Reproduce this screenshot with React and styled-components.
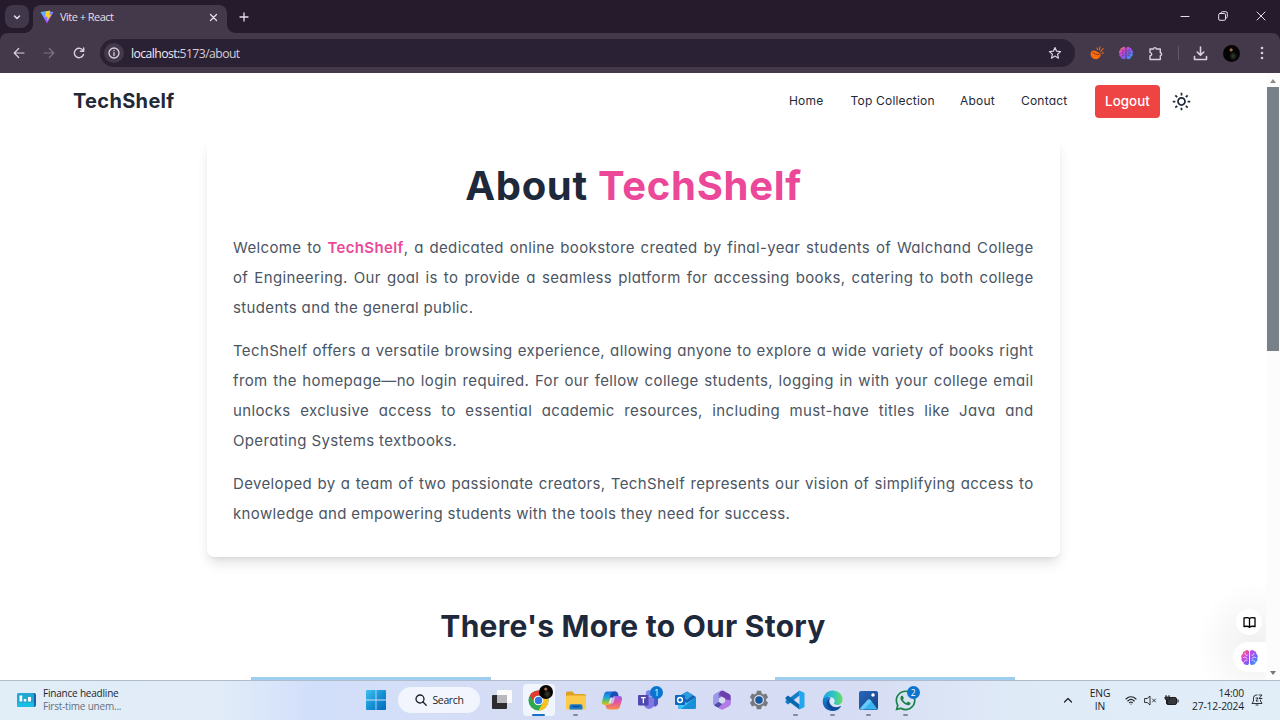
import React from "react";
import styled, { createGlobalStyle, css } from "styled-components";
import { BiSun } from "react-icons/bi";
import { FaWhatsapp } from "react-icons/fa";

const Global = createGlobalStyle`
  *, *::before, *::after { box-sizing: border-box; }
  html, body, #root { margin: 0; height: 100%; }
  body { overflow: hidden; background: #fff; font-family: Inter, "Liberation Sans", sans-serif; }
  h1, h2, p { margin: 0; }
  svg { display: block; flex: none; }
`;

const Screen = styled.div`
  width: 1280px;
  height: 720px;
  display: flex;
  flex-direction: column;
  overflow: hidden;
`;

/* Browser window */
const TabStrip = styled.div`
  height: 33px;
  flex: none;
  display: flex;
  background: #251b2d;
  padding: 5px 0 0 5px;
  color: #e6dfea;
`;
const TabSearch = styled.div`
  width: 24px;
  height: 23px;
  border-radius: 8px;
  background: #41374a;
  display: grid;
  place-items: center;
`;
const Tab = styled.div`
  position: relative;
  width: 194px;
  height: 28px;
  margin-left: 4px;
  padding: 0 9px 4px 7px;
  border-radius: 8px 8px 0 0;
  background: #43394b;
  display: flex;
  align-items: center;
  font: 11px "Open Sans", sans-serif;
  &::before, &::after {
    content: "";
    position: absolute;
    bottom: 0;
    width: 8px;
    height: 8px;
  }
  &::before { left: -8px; background: radial-gradient(circle at 0 0, transparent 7.5px, #43394b 8px); }
  &::after { right: -8px; background: radial-gradient(circle at 100% 0, transparent 7.5px, #43394b 8px); }
`;
const TabTitle = styled.span`
  flex: 1;
  margin: -1px 0 0 6px;
  letter-spacing: -0.53px;
`;
const NewTab = styled.div`
  margin: 7px 0 0 12px;
`;
const WindowButtons = styled.div`
  display: flex;
  gap: 28px;
  margin: 6px 14px 0 auto;
`;
const ToolbarBack = styled.div`
  background: #251b2d;
  flex: none;
`;
const Toolbar = styled.div`
  height: 40px;
  background: #43394b;
  border-radius: 8px 8px 0 0;
  display: flex;
  align-items: center;
  padding: 0 12px;
  color: #d9d0df;
`;
const NavButtons = styled.div`
  display: flex;
  gap: 16px;
  width: 88px;
`;
const AddressBar = styled.div`
  width: 975px;
  height: 28px;
  border-radius: 14px;
  background: #2b2134;
  display: flex;
  align-items: center;
  padding: 0 13px 0 4px;
`;
const SiteInfo = styled.div`
  width: 20px;
  height: 20px;
  border-radius: 50%;
  background: #43394b;
  display: grid;
  place-items: center;
`;
const Url = styled.span`
  flex: 1;
  margin-left: 7px;
  font: 12.2px "Open Sans", sans-serif;
  letter-spacing: -0.57px;
  color: #d5ccda;
  b { font-weight: 400; color: #f0e9f3; }
`;
const Extensions = styled.div`
  display: flex;
  align-items: center;
  gap: 15px;
  margin-left: 15px;
`;
const Divider = styled.i`
  width: 1px;
  height: 14px;
  margin-right: -1px;
  background: #62576a;
`;
const MoreIcon = styled.svg`
  margin-left: 5px;
`;
const Avatar = styled.span`
  display: block;
  width: 17px;
  height: 17px;
  flex: none;
  border-radius: 50%;
  background:
    radial-gradient(circle at 48% 29%, #a4704e 0 1px, transparent 2px),
    radial-gradient(ellipse at 60% 65%, #2d3326 0 1px, transparent 4px),
    #050405;
`;

/* Web page */
const Viewport = styled.div`
  height: 607px;
  flex: none;
  display: flex;
  position: relative;
  font-feature-settings: "cv11";
`;
const Page = styled.main`
  width: 1266px;
  height: 607px;
  overflow: hidden;
  background: #fff;
`;
const Header = styled.header`
  height: 57px;
  display: flex;
  align-items: center;
  padding: 0 74px 0 73px;
  color: #1f2937;
`;
const Brand = styled.div`
  font-size: 20px;
  font-weight: 700;
  letter-spacing: 0.32px;
  padding-bottom: 1px;
`;
const Menu = styled.nav`
  margin-left: auto;
  display: flex;
  gap: 26px;
  margin-right: 26px;
  padding-bottom: 3px;
  font-size: 12px;
  color: #1f2937;
`;
const MenuItem = styled.a`
  width: ${(p) => p.$w}px;
  white-space: nowrap;
  letter-spacing: 0.2px;
`;
const Logout = styled.button`
  width: 65px;
  height: 33px;
  border: 0;
  padding: 0 0 2px;
  border-radius: 4px;
  background: #ef4444;
  color: #fff;
  font: 500 13.3px Inter, sans-serif;
  font-feature-settings: "cv11";
  letter-spacing: 0.1px;
  margin-right: 11px;
`;
const Card = styled.section`
  width: 853px;
  height: 418px;
  margin: 9px 0 0 207px;
  padding: 19px 26px 0;
  border-radius: 7px;
  background: #fff;
  box-shadow: 0 8px 13px -2px rgba(0, 0, 0, 0.12), 0 3px 5px -3px rgba(0, 0, 0, 0.1);
`;
const Title = styled.h1`
  height: 56px;
  line-height: 55px;
  text-align: center;
  font-size: 40px;
  font-weight: 700;
  letter-spacing: 0.7px;
  white-space: nowrap;
  color: #1e293b;
`;
const Pink = styled.span`
  color: #ec4899;
  font-weight: ${(p) => p.$weight || "inherit"};
`;
const Paragraph = styled.p`
  margin-top: 13.2px;
  font-size: 15px;
  line-height: 30px;
  color: #4b5563;
  &:first-of-type { margin-top: 19px; }
`;
const Line = styled.span`
  display: block;
  width: 800.5px;
  white-space: nowrap;
  letter-spacing: 0.36px;
  ${(p) => !p.$last && css`text-align-last: justify;`}
`;
const Subtitle = styled.h2`
  margin-top: 47px;
  height: 44px;
  line-height: 44px;
  text-align: center;
  font-size: 30px;
  font-weight: 700;
  letter-spacing: 0.26px;
  color: #1e293b;
`;
const Features = styled.div`
  display: flex;
  justify-content: space-between;
  width: 764px;
  margin: 29px auto 0;
`;
const Feature = styled.div`
  width: 240px;
  height: 200px;
  background: ${(p) => (p.$blue ? "#9fcdee" : "transparent")};
`;
const Scrollbar = styled.div`
  width: 14px;
  height: 607px;
  display: flex;
  flex-direction: column;
  align-items: center;
  background: #fcfcfc;
  padding: 5px 0 5px;
`;
const Thumb = styled.div`
  width: 12px;
  height: 264px;
  margin-top: 4px;
  background: #788088;
`;
const Arrow = styled.i`
  width: 0;
  height: 0;
  border: 3px solid transparent;
  ${(p) => (p.$up ? css`border-bottom: 4px solid #8a8a8a; border-top: 0; margin: 1px 0 0;` : css`border-top: 4px solid #777; border-bottom: 0; margin-top: auto;`)}
`;
const Floating = styled.div`
  position: absolute;
  right: 14px;
  bottom: 0;
  width: 70px;
  height: 100px;
  padding: 29px 0 0;
  display: flex;
  flex-direction: column;
  align-items: flex-end;
  background: radial-gradient(ellipse at 85% 65%, rgba(0, 0, 0, 0.06), transparent 70%);
`;
const ReadButton = styled.div`
  width: 26px;
  height: 26px;
  margin: 0 4px 7px 0;
  border-radius: 50%;
  background: #fff;
  display: grid;
  place-items: center;
`;
const BrainButton = styled.div`
  width: 33px;
  height: 30px;
  border-radius: 15px 0 0 15px;
  background: #fff;
  display: flex;
  align-items: center;
  padding-left: 8px;
`;

/* Taskbar */
const Taskbar = styled.footer`
  height: 40px;
  flex: none;
  border-top: 1px solid #afbccb;
  background: linear-gradient(90deg, #e1edf7 0, #e1ecf8 220px, #d2dffa 310px, #d5ddf5 500px, #d6dcf3 850px, #dfeaf7 1010px, #e1eef8 1280px);
  display: flex;
  align-items: center;
  padding-bottom: 1px;
  font-family: "Open Sans", sans-serif;
  color: #1c1f26;
`;
const Widget = styled.div`
  width: 366px;
  padding: 0 0 1px 17px;
  display: flex;
  align-items: center;
  gap: 7px;
`;
const WidgetText = styled.div`
  font-size: 10px;
  line-height: 13px;
  letter-spacing: -0.2px;
  div + div { color: #66707c; }
`;
const SearchPill = styled.div`
  width: 82px;
  height: 26px;
  margin: 0 4px 0 12px;
  border-radius: 13px;
  background: #f2f5fd;
  display: flex;
  align-items: center;
  justify-content: center;
  gap: 5px;
  padding-left: 1px;
  font-size: 10.5px;
  letter-spacing: -0.35px;
`;
const AppCell = styled.div`
  position: relative;
  width: 36.65px;
  height: 38px;
  display: grid;
  place-items: center;
  isolation: isolate;
  ${(p) => p.$active && css`
    &::before {
      content: "";
      position: absolute;
      z-index: -1;
      inset: 3px 2.5px 3px;
      border-radius: 4px;
      background: #f1f5fe;
    }
  `}
  ${(p) => p.$open && css`
    &::after {
      content: "";
      position: absolute;
      bottom: 3px;
      width: ${p.$active ? 13 : 5}px;
      height: 2.5px;
      border-radius: 2px;
      background: ${p.$active ? "#1670c4" : "#858a98"};
    }
  `}
`;
const Badge = styled.span`
  position: absolute;
  top: 5px;
  right: 4px;
  width: 13px;
  height: 13px;
  border-radius: 50%;
  background: #0a74cf;
  color: #fff;
  font-size: 8.5px;
  line-height: 13px;
  text-align: center;
`;
const BadgeAvatar = styled(Avatar)`
  position: absolute;
  top: 4px;
  right: 4px;
  width: 14px;
  height: 14px;
`;
const Tray = styled.div`
  margin-left: auto;
  padding-right: 17px;
  display: flex;
  align-items: center;
`;
const TrayText = styled.div`
  width: ${(p) => p.$w}px;
  font-size: 10.3px;
  line-height: 13px;
  letter-spacing: -0.17px;
  text-align: ${(p) => p.$align || "right"};
`;
const TrayIcons = styled.div`
  display: flex;
  align-items: center;
  gap: 7px;
  margin-left: -2px;
`;
const Clock = styled.div`
  display: flex;
  align-items: center;
  gap: 7px;
`;

const Stroke = ({ w = 14, vb = 14, sw = 1.4, d, children, color = "currentColor", h = w }) => (
  <svg width={w} height={h} viewBox={`0 0 ${vb} ${vb}`} fill="none" stroke={color} strokeWidth={sw} strokeLinecap="round" strokeLinejoin="round">
    {d && <path d={d} />}
    {children}
  </svg>
);

const HiddenSvg = styled.svg`
  position: absolute;
`;

const Defs = () => (
  <HiddenSvg width="0" height="0">
    <defs>
      <linearGradient id="brain" gradientUnits="userSpaceOnUse" x1="0" y1="0" x2="17" y2="17">
        <stop offset=".08" stopColor="#ff8a3c" />
        <stop offset=".3" stopColor="#dc45d4" />
        <stop offset=".6" stopColor="#7f5cf5" />
        <stop offset="1" stopColor="#14bdf8" />
      </linearGradient>
      <linearGradient id="win" gradientUnits="userSpaceOnUse" x1="0" y1="0" x2="20" y2="20">
        <stop offset="0" stopColor="#3fc0ee" />
        <stop offset=".5" stopColor="#1593d6" />
        <stop offset="1" stopColor="#0569bd" />
      </linearGradient>
      <linearGradient id="viteA" x1="0" y1="0" x2=".7" y2="1">
        <stop offset="0" stopColor="#41d1ff" />
        <stop offset="1" stopColor="#bd34fe" />
      </linearGradient>
      <linearGradient id="edgeA" x1="0" y1="0" x2="1" y2="0">
        <stop offset="0" stopColor="#1ba3e4" />
        <stop offset=".6" stopColor="#34c7bd" />
        <stop offset="1" stopColor="#6bdf53" />
      </linearGradient>
      <linearGradient id="edgeB" x1="0" y1="0" x2="0" y2="1">
        <stop offset="0" stopColor="#1489d8" />
        <stop offset="1" stopColor="#0d50a5" />
      </linearGradient>
      <linearGradient id="copA" x1="0" y1="0" x2="0" y2="1">
        <stop offset="0" stopColor="#1769df" />
        <stop offset=".45" stopColor="#20a9d8" />
        <stop offset=".75" stopColor="#79c54a" />
        <stop offset="1" stopColor="#f1b81f" />
      </linearGradient>
      <linearGradient id="copB" x1="0" y1="0" x2="0" y2="1">
        <stop offset="0" stopColor="#9b61ef" />
        <stop offset=".5" stopColor="#e4559e" />
        <stop offset="1" stopColor="#fa9248" />
      </linearGradient>
      <linearGradient id="photo" x1="0" y1="0" x2="1" y2="1">
        <stop offset="0" stopColor="#2468bb" />
        <stop offset="1" stopColor="#1c4284" />
      </linearGradient>
    </defs>
  </HiddenSvg>
);

const BrainLogo = ({ size, gap }) => (
  <svg width={size} height={size} viewBox="0 0 17 17">
    <path fill="url(#brain)" d="M8 2.600A2.200 2.200 0 0 0 4 2 2.600 2.600 0 0 0 1.700 5 2.800 2.800 0 0 0 .8 9.200a2.900 2.900 0 0 0 1.500 4.100A2.700 2.700 0 0 0 5 15.800 2 2 0 0 0 8 14.500zM9 2.600A2.200 2.200 0 0 1 13 2a2.600 2.600 0 0 1 2.300 3 2.800 2.800 0 0 1 .9 4.200 2.900 2.900 0 0 1-1.500 4.100 2.700 2.700 0 0 1-2.700 2.500 2 2 0 0 1-3-1.300z" />
    <path fill="none" stroke={gap} strokeWidth=".75" strokeLinecap="round" d="M4 4.500c0 1.300 1 2 2.200 1.800M2.500 8.500c1.500-.8 3-.3 3.500.8M3.500 12.500c.2-1.200 1.200-1.700 2.500-1.300M13 4.500c0 1.300-1 2-2.200 1.800M14.500 8.500c-1.500-.8-3-.3-3.500.8M13.500 12.500c-.2-1.200-1.200-1.700-2.500-1.300" />
  </svg>
);
const ViteLogo = () => (
  <svg width="14" height="14" viewBox="0 0 28 28">
    <path d="M1 4 13 2l14 2-13 23z" fill="url(#viteA)" />
    <path d="m12 3 8-2-1 9 4-1-9 13 1-9-5 1z" fill="#ffcf27" />
  </svg>
);
const WidgetIcon = () => (
  <svg width="19" height="14" viewBox="0 0 19 14">
    <rect x="9" y="0" width="10" height="14" rx="2" fill="#1a61ad" />
    <rect width="17" height="14" rx="1.5" fill="#20a8d2" />
    <path d="M0 10h17v2.5a1.5 1.5 0 0 1-1.5 1.5h-14A1.5 1.5 0 0 1 0 12.500z" fill="#18bfe3" />
    <path d="M2.500 2.500h2.700v6H2.500zM6.800 6h2.500v2.500H6.800zM11 4h3v4.500h-3z" fill="#fff" />
  </svg>
);
const WindowsLogo = () => (
  <svg width="20" height="20" viewBox="0 0 20 20" fill="url(#win)">
    <path d="M0 1a1 1 0 0 1 1-1h8.600v9.600H0zM10.400 0H19a1 1 0 0 1 1 1v8.600h-9.600zM0 10.400h9.600V20H1a1 1 0 0 1-1-1zM10.400 10.400H20V19a1 1 0 0 1-1 1h-8.600z" />
  </svg>
);
const TaskView = () => (
  <svg width="20" height="20" viewBox="0 0 20 20">
    <rect x="0" y="5" width="15" height="14" rx="1" fill="#2d2c2e" />
    <rect x="5" y="0" width="15" height="13" rx="1" fill="#fbfbfc" />
    <path d="M5 5h10v8H5z" fill="#b9b9bd" />
  </svg>
);
const Chrome = () => (
  <svg width="21" height="21" viewBox="0 0 48 48">
    <circle cx="24" cy="24" r="23" fill="#2da84e" />
    <path d="M24 13h20A23 23 0 0 1 24 47l9.500-17.500z" fill="#fcc31e" />
    <path d="M4.100 12.500A23 23 0 0 1 43.900 12.500H24A11 11 0 0 0 14.500 29z" fill="#e33b2e" />
    <circle cx="24" cy="24" r="11" fill="#fff" />
    <circle cx="24" cy="24" r="8.500" fill="#3277e2" />
  </svg>
);
const Folder = () => (
  <svg width="20" height="19" viewBox="0 0 20 19">
    <path d="M0 2a1.500 1.500 0 0 1 1.500-1.500h5L8.500 3H18a2 2 0 0 1 2 2v6H0z" fill="#dea122" />
    <rect y="4.500" width="20" height="14" rx="1.500" fill="#fdcb4b" />
    <path d="M3.500 18.500V15a1.800 1.800 0 0 1 1.800-1.800h9.400a1.800 1.800 0 0 1 1.800 1.800v3.500z" fill="#1878c9" />
    <path d="M6.500 15.500h7" stroke="#0b4a87" strokeWidth="1.300" />
  </svg>
);
const Copilot = () => (
  <svg width="20" height="19" viewBox="0 0 40 38">
    <path d="M11 1h15c4 0 5 2 6 5l1 3h-5c-4 0-6 2-7 6l-3 8c-1 4-3 5-6 5H6c-5 0-7-3-6-7L4 7c1-4 3-6 7-6z" fill="url(#copA)" />
    <path d="M29 37H14c-4 0-5-2-6-5l-1-4h5c4 0 6-2 7-6l3-8c1-3 3-4 6-4h6c5 0 7 3 6 7l-4 14c-1 4-3 6-7 6z" fill="url(#copB)" />
    <path d="M26 1c4 0 5 2 6 5l1 4h-5c-4 0-6 1-7 4l-1 1h-5l2-8c1-4 4-6 9-6z" fill="#1c4cb4" />
    <path d="M17 13h4l-4 12h-4z" fill="#dfe6fa" />
    <path d="M22 13h4l-4 12h-4z" fill="#dfe6fa" opacity=".7" />
  </svg>
);
const Teams = () => (
  <svg width="21" height="20" viewBox="0 0 21 20">
    <circle cx="11" cy="3.500" r="3.200" fill="#7b83eb" />
    <path d="M14 7h6v6.500a3.500 3.500 0 0 1-6 2z" fill="#5059c9" />
    <path d="M6 7h10v7a5 5 0 0 1-10 0z" fill="#8178e3" />
    <rect x="0" y="5" width="10.500" height="10.500" rx="1" fill="#4d49ad" />
    <path d="M3 7.700h4.700M5.350 7.700v5.500" stroke="#fff" strokeWidth="1.300" />
  </svg>
);
const Outlook = () => (
  <svg width="21" height="18" viewBox="0 0 21 18">
    <path d="M3 6 12 .5 21 6v10a2 2 0 0 1-2 2H5a2 2 0 0 1-2-2z" fill="#1565b4" />
    <path d="M6 4 12 .5 18 4l-6 5z" fill="#2f9ade" />
    <path d="m3 7 9 5 9-6v10a2 2 0 0 1-2 2H5a2 2 0 0 1-2-2z" fill="#3cc5f2" />
    <path d="M21 6 6 18h13a2 2 0 0 0 2-2z" fill="#178fda" />
    <rect y="4" width="10" height="10" rx="1" fill="#0b68bd" />
    <circle cx="5" cy="9" r="2.400" fill="none" stroke="#fff" strokeWidth="1.500" />
  </svg>
);
const M365 = () => (
  <svg width="18" height="20" viewBox="0 0 36 40">
    <path fillRule="evenodd" d="M15 2c2-1 4-1 6 0l11 6c2 1 3 3 3 5v14c0 2-1 4-3 5l-11 6c-2 1-4 1-6 0L4 32c-2-1-3-3-3-5V13c0-2 1-4 3-5zM18 13l-7 4v7l7 4 7-4v-7z" fill="#8a6bd0" />
    <path d="M15 2c2-1 4-1 6 0L11 9v15L3 30c-1-1-2-2-2-3V13c0-2 1-4 3-5z" fill="#9a9be6" />
    <path d="M21 2l11 6c2 1 3 3 3 5v10l-10-4v-2L11 9l4-6c2-2 4-2 6-1z" fill="#6c41ad" />
    <path d="M35 20v7c0 2-1 4-3 5l-11 6c-2 1-4 1-6 0l-5-3 15-11v-5z" fill="#b47be6" />
    <path d="M3 30l8-6 7 4-7 7-7-3z" fill="#4a4ea8" />
  </svg>
);
const Gear = () => (
  <svg width="20" height="20" viewBox="0 0 24 24">
    <path fill="#77797e" d="m9.500 1 5 0 .8 3.200 1.900 1.100 3.200-1 2.500 4.400L20.500 11v2l2.400 2.300-2.500 4.400-3.200-1-1.900 1.100-.8 3.200h-5l-.8-3.200-1.900-1.100-3.200 1L1.100 15.300 3.500 13v-2L1.100 8.700l2.500-4.400 3.200 1 1.900-1.100z" />
    <circle cx="12" cy="12" r="6" fill="#d9dff1" />
    <circle cx="12" cy="12" r="4.500" fill="#17599e" />
  </svg>
);
const VsCode = () => (
  <svg width="20" height="20" viewBox="0 0 40 40">
    <path d="M29 1 39 6v28l-10 5z" fill="#23a6ee" />
    <path d="M29 1v10L6 29l-5-4v-3z" fill="#147fc9" />
    <path d="M29 39V29L6 11l-5 4v3z" fill="#0768ae" />
  </svg>
);
const Edge = () => (
  <svg width="21" height="21" viewBox="0 0 42 42">
    <path d="M2 19C4 8 11 1 21 1c11 0 20 8 20 17 0 8-5 12-11 12-5 0-7-2-6-4 2-3 2-11-7-12-7-1-12 1-15 5z" fill="url(#edgeA)" />
    <path d="M2 18c3-4 9-6 16-3-8 1-9 10-5 16 5 8 15 8 24 3-4 6-10 8-16 8C9 42-1 32 2 18z" fill="url(#edgeB)" />
    <path d="M18 16c-5 2-4 10 0 14 4 5 12 6 19 2 1 0 1 1 0 2-6 7-19 8-25-1-5-7-2-17 6-17z" fill="#0d4a94" />
    <path d="M24 26c1-2 2-6-1-9-4-2-8 3-5 8 3 6 12 9 19 6l-7-1c-5 0-7-2-6-4z" fill="#e2e8f8" />
  </svg>
);
const Photos = () => (
  <svg width="19" height="19" viewBox="0 0 38 38">
    <rect width="38" height="38" rx="4" fill="url(#photo)" />
    <path d="M2 35 17 18c2-2 4-2 6 0l13 17-2 2H4z" fill="#39b4f0" />
    <path d="M2 35 17 18c2-2 4-2 6 0l2 3-16 16H4z" fill="#7bd4fb" opacity=".7" />
    <circle cx="28" cy="8" r="3.500" fill="#fff" />
  </svg>
);
const Tangerine = () => (
  <svg width="14" height="14" viewBox="0 0 14 14">
    <path d="M1 5.800C3.200 3.300 6.500 5 10.600 8c.5 2.300-1.800 5-4.800 5.200C2.300 13.400-.6 9.200 1 5.800z" fill="#fb6a0b" />
    <path d="M2.500 5.800C3.500 7.600 6.500 8.900 9.500 8.500" stroke="#67343a" strokeWidth=".8" fill="none" />
    <path d="M7.500 3.500 7 2M9.300 4 9.900.9M10.800 5.500l2.300-2.800M11.700 7.200l1.600-.3" stroke="#fb6a0b" strokeWidth="1.100" strokeLinecap="round" />
  </svg>
);

const storyLines = [
  [
    <>Welcome to <Pink $weight={600}>TechShelf</Pink>, a dedicated online bookstore created by final-year students of Walchand College</>,
    "of Engineering. Our goal is to provide a seamless platform for accessing books, catering to both college",
    "students and the general public.",
  ],
  [
    "TechShelf offers a versatile browsing experience, allowing anyone to explore a wide variety of books right",
    "from the homepage—no login required. For our fellow college students, logging in with your college email",
    "unlocks exclusive access to essential academic resources, including must-have titles like Java and",
    "Operating Systems textbooks.",
  ],
  [
    "Developed by a team of two passionate creators, TechShelf represents our vision of simplifying access to",
    "knowledge and empowering students with the tools they need for success.",
  ],
];

const apps = [
  { icon: <TaskView /> },
  { icon: <Chrome />, open: true, active: true, avatar: true },
  { icon: <Folder />, open: true },
  { icon: <Copilot /> },
  { icon: <Teams />, badge: "1" },
  { icon: <Outlook /> },
  { icon: <M365 /> },
  { icon: <Gear /> },
  { icon: <VsCode />, open: true },
  { icon: <Edge />, open: true },
  { icon: <Photos />, open: true },
  { icon: <FaWhatsapp size={23} color="#198247" />, open: true, badge: "2" },
];

export default function App() {
  return (
    <Screen>
      <Global />
      <Defs />
      <TabStrip>
        <TabSearch><Stroke w={8} vb={8} d="m1.500 3 2.500 2.500L6.500 3" sw={1.500} /></TabSearch>
        <Tab>
          <ViteLogo />
          <TabTitle>Vite + React</TabTitle>
          <Stroke w={9} vb={9} d="m1.500 1.500 6 6m0-6-6 6" sw={1.300} />
        </Tab>
        <NewTab><Stroke w={10} vb={10} d="M5 1v8M1 5h8" sw={1.300} /></NewTab>
        <WindowButtons>
          <Stroke w={10} vb={10} d="M1 5.500h8" sw={1} />
          <Stroke w={10} vb={10} sw={1} d="M3 2.500V2A1.300 1.300 0 0 1 4.300.7h3.500A1.500 1.500 0 0 1 9.300 2.200v3.500A1.300 1.300 0 0 1 8 7h-.5">
            <rect x=".7" y="2.500" width="6.800" height="6.800" rx="1.200" />
          </Stroke>
          <Stroke w={10} vb={10} d="m1 1 8 8m0-8-8 8" sw={1} />
        </WindowButtons>
      </TabStrip>
      <ToolbarBack>
        <Toolbar>
          <NavButtons>
            <Stroke d="M12 7H2.500M6.700 2.500 2.200 7l4.500 4.500" sw={1.200} />
            <Stroke d="M2 7h9.500M7.300 2.500 11.800 7l-4.500 4.500" color="#7d7385" sw={1.200} />
            <Stroke d="M11.300 5A4.700 4.700 0 1 0 11.500 8.500M11.700 2v3.300H8.400" />
          </NavButtons>
          <AddressBar>
            <SiteInfo>
              <Stroke w={12} vb={12} sw={1.300} d="M6 5.700v2.800M6 3.500v.2"><circle cx="6" cy="6" r="5" /></Stroke>
            </SiteInfo>
            <Url><b>localhost:</b>5173/about</Url>
            <Stroke w={14} vb={14} sw={1.200} d="m7 1.500 1.600 3.700 4 .4-3 2.700.9 3.900L7 10.100l-3.500 2.100.9-3.900-3-2.700 4-.4z" />
          </AddressBar>
          <Extensions>
            <Tangerine />
            <BrainLogo size={14} gap="#43394b" />
            <Stroke w={15} vb={15} sw={1.400} d="M2 3h3.500c0-1.800 2.800-1.800 2.800 0h4v3.800c1.700 0 1.700 2.800 0 2.800v3.900H2v-3.700c2.300-.2 2.300-3 0-3.200z" />
            <Divider />
            <Stroke w={15} vb={15} sw={1.600} d="M7.500 1v8M4.200 6l3.300 3.300L10.800 6M1.500 10.500v3h12v-3" />
            <Avatar />
            <MoreIcon width="4" height="14" viewBox="0 0 4 14" fill="currentColor">
              <circle cx="2" cy="2" r="1.300" />
              <circle cx="2" cy="7" r="1.300" />
              <circle cx="2" cy="12" r="1.300" />
            </MoreIcon>
          </Extensions>
        </Toolbar>
      </ToolbarBack>

      <Viewport>
        <Page>
          <Header>
            <Brand>TechShelf</Brand>
            <Menu>
              <MenuItem $w={35.500}>Home</MenuItem>
              <MenuItem $w={83.500}>Top Collection</MenuItem>
              <MenuItem $w={35}>About</MenuItem>
              <MenuItem $w={48}>Contact</MenuItem>
            </Menu>
            <Logout>Logout</Logout>
            <BiSun size={21} />
          </Header>
          <Card>
            <Title>About <Pink>TechShelf</Pink></Title>
            {storyLines.map((lines, i) => (
              <Paragraph key={i}>
                {lines.map((line, j) => (
                  <Line key={j} $last={j === lines.length - 1}>{line}</Line>
                ))}
              </Paragraph>
            ))}
          </Card>
          <Subtitle>There's More to Our Story</Subtitle>
          <Features>
            <Feature $blue />
            <Feature />
            <Feature $blue />
          </Features>
        </Page>
        <Scrollbar>
          <Arrow $up />
          <Thumb />
          <Arrow />
        </Scrollbar>
        <Floating>
          <ReadButton>
            <Stroke w={13} vb={13} sw={1.300} d="M6.500 2.500C5.500 1.500 3 1.500 1 2v8.500c2-.4 4.500-.3 5.500.8 1-1.100 3.500-1.200 5.500-.8V2c-2-.5-4.500-.5-5.500.5zv8.500" />
          </ReadButton>
          <BrainButton><BrainLogo size={17} gap="#fff" /></BrainButton>
        </Floating>
      </Viewport>

      <Taskbar>
        <Widget>
          <WidgetIcon />
          <WidgetText><div>Finance headline</div><div>First-time unem...</div></WidgetText>
        </Widget>
        <WindowsLogo />
        <SearchPill>
          <Stroke w={12} vb={12} sw={1.300} d="m7.800 7.800 3.400 3.400"><circle cx="5" cy="5" r="4" /></Stroke>
          Search
        </SearchPill>
        {apps.map((app, i) => (
          <AppCell key={i} $open={app.open} $active={app.active}>
            {app.icon}
            {app.badge && <Badge>{app.badge}</Badge>}
            {app.avatar && <BadgeAvatar />}
          </AppCell>
        ))}
        <Tray>
          <Stroke w={10} vb={10} d="m1.500 7 3.500-3.500L8.500 7" sw={1.200} />
          <TrayText $w={54} $align="center">ENG<br />IN</TrayText>
          <TrayIcons>
            <Stroke w={12} vb={12} sw={1.100} d="M1 5c3-3 7-3 10 0M2.800 7c2-2 4.400-2 6.400 0M4.500 8.700c1-.9 2-.9 3 0M6 10v.1" />
            <Stroke w={13} vb={13} sw={0.900} d="M1 4.500h2.200L6 2v9L3.200 8.500H1zM8.500 5l3 3m0-3-3 3" />
            <svg width="15" height="13" viewBox="0 0 15 13">
              <rect x="2.500" y="3.500" width="10" height="7" rx="1.500" fill="#34373c" stroke="#1d1d20" />
              <path d="M14 5.500v3" stroke="#1d1d20" strokeWidth="1.200" />
              <path d="M2 1v2M5 1v2M1 3h5v1.500c0 2-5 2-5 0zM3.500 6v4" stroke="#1d1d20" strokeWidth=".9" fill="#34373c" />
            </svg>
          </TrayIcons>
          <Clock>
            <TrayText $w={65}>14:00<br />27-12-2024</TrayText>
            <Stroke w={12} vb={12} sw={0.900} d="M6 1H5a3 3 0 0 0-2.500 3v3L1 9.500h10L9.500 7V6M5 11h2M5 4h2L5 7h2M8 1h3L8 4.500h3" />
          </Clock>
        </Tray>
      </Taskbar>
    </Screen>
  );
}
